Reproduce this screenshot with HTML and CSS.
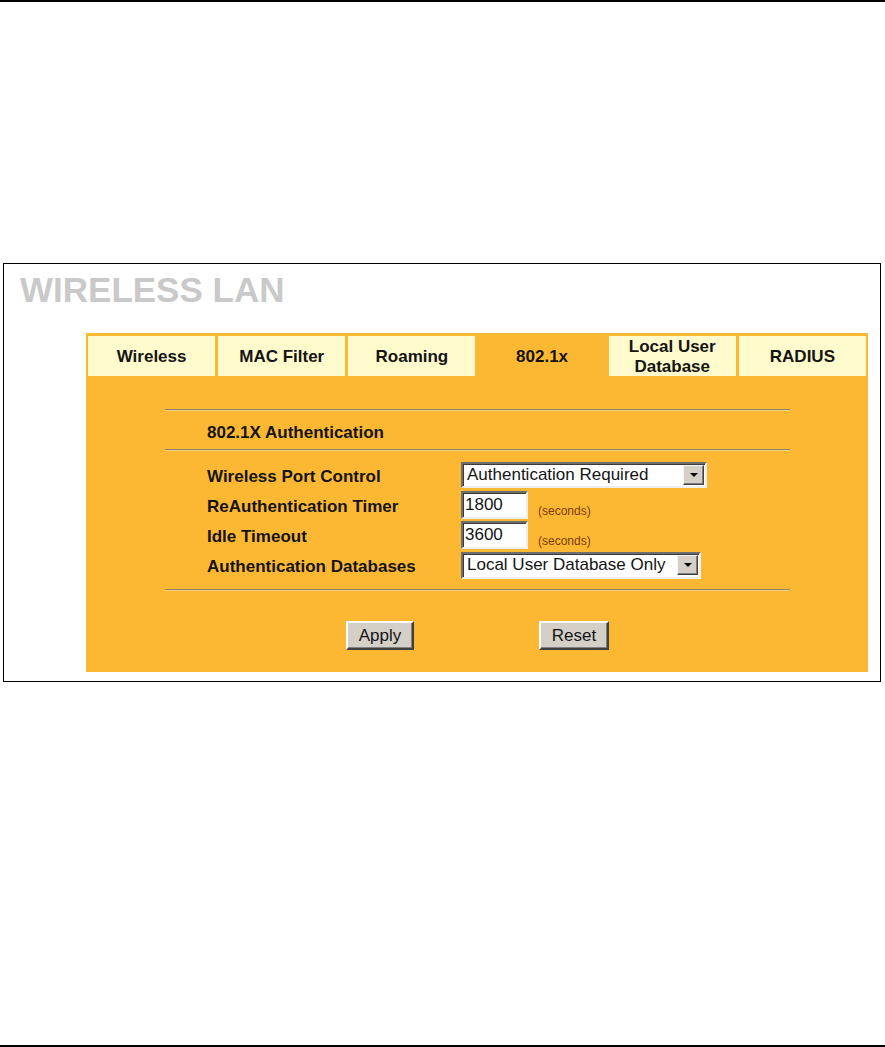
FILE: index.html
```html
<!DOCTYPE html>
<html lang="en">
<head>
  <meta charset="UTF-8" />
  <meta name="viewport" content="width=device-width, initial-scale=1.0"/>
  <title>Wireless LAN - 802.1x</title>
  <link rel="stylesheet" href="styles.css">
</head>
<body>
  <div class="page">
    <div class="top-rule"></div>

    <div class="frame">
      <h1 class="title">WIRELESS LAN</h1>

      <div class="panel">
        <div class="tabs">
          <div class="tab">Wireless</div>
          <div class="tab">MAC Filter</div>
          <div class="tab">Roaming</div>
          <div class="tab active">802.1x</div>
          <div class="tab">Local User<br>Database</div>
          <div class="tab">RADIUS</div>
        </div>

        <div class="content">
          <div class="rule"></div>
          <div class="section-title">802.1X Authentication</div>
          <div class="rule"></div>

          <div class="fields">
            <div class="row">
              <span class="label">Wireless Port Control</span>
              <div class="select port-select">
                <span class="select-value">Authentication Required</span>
                <span class="arrow"><svg width="8" height="4" viewBox="0 0 8 4"><path d="M0 0h8L4 4z" fill="#000"/></svg></span>
              </div>
            </div>
            <div class="row">
              <span class="label">ReAuthentication Timer</span>
              <input class="text-input" type="text" value="1800">
              <span class="unit">(seconds)</span>
            </div>
            <div class="row">
              <span class="label">Idle Timeout</span>
              <input class="text-input" type="text" value="3600">
              <span class="unit">(seconds)</span>
            </div>
            <div class="row">
              <span class="label">Authentication Databases</span>
              <div class="select db-select">
                <span class="select-value">Local User Database Only</span>
                <span class="arrow"><svg width="8" height="4" viewBox="0 0 8 4"><path d="M0 0h8L4 4z" fill="#000"/></svg></span>
              </div>
            </div>
          </div>

          <div class="rule"></div>

          <div class="actions">
            <button class="btn apply">Apply</button>
            <button class="btn reset">Reset</button>
          </div>
        </div>
      </div>
    </div>

    <div class="bottom-rule"></div>
  </div>
</body>
</html>
```

FILE: styles.css
```css
body {
  margin: 0;
  font-family: 'Liberation Sans', Arial, sans-serif;
  background: #fff;
  color: #141414;
}
.page {
  min-height: 100vh;
  display: flex;
  flex-direction: column;
}
.top-rule {
  height: 2px;
  background: #000;
}
.bottom-rule {
  height: 2px;
  background: #000;
  margin-top: auto;
}
.frame {
  margin: 261px 0 0 3px;
  width: 876px;
  border: 1px solid #000;
  padding: 6px 0 9px;
}
.title {
  margin: 0 0 23px 16px;
  font-size: 35px;
  line-height: 40px;
  font-weight: bold;
  color: #c9c9c9;
}
.panel {
  margin: 0 12px 0 82px;
  background: #fcb833;
  padding: 3px 2px 22px;
}
.tabs {
  display: grid;
  grid-template-columns: repeat(6, 1fr);
  gap: 3px;
}
.tab {
  height: 40px;
  background: #fffbcc;
  display: flex;
  align-items: center;
  justify-content: center;
  text-align: center;
  font-size: 17px;
  line-height: 20px;
  font-weight: bold;
  padding-top: 2px;
  box-sizing: border-box;
}
.tab.active {
  background: transparent;
}
.content {
  margin: 33px 76px 0 77px;
}
.rule {
  border-top: 1px solid #8f8468;
  border-bottom: 1px solid #f2cf86;
}
.section-title {
  height: 38px;
  box-sizing: border-box;
  display: flex;
  align-items: center;
  padding: 5px 0 0 42px;
  font-size: 17px;
  font-weight: bold;
}
.fields {
  padding: 9px 0 9px 42px;
}
.row {
  height: 30px;
  display: flex;
  align-items: center;
}
.label {
  width: 254px;
  flex: none;
  padding-top: 4px;
  font-size: 17px;
  font-weight: bold;
}
.select {
  height: 26px;
  box-sizing: border-box;
  display: flex;
  align-items: center;
  background: #fff;
  border: 2px solid;
  border-color: #6e6e6e #eeeeee #eeeeee #6e6e6e;
  box-shadow: inset 1px 1px 0 #3a3a3a;
  padding: 0 1px 0 4px;
  font-size: 17px;
}
.port-select {
  width: 246px;
}
.db-select {
  width: 240px;
  height: 27px;
}
.select-value {
  flex: 1;
  white-space: nowrap;
}
.arrow {
  width: 21px;
  height: 20px;
  box-sizing: border-box;
  display: flex;
  align-items: center;
  justify-content: center;
  background: #d4d0c8;
  border: 1px solid;
  border-color: #f4f4f4 #404040 #404040 #f4f4f4;
  box-shadow: inset -1px -1px 0 #808080;
}
.text-input {
  width: 67px;
  height: 28px;
  box-sizing: border-box;
  margin: 0;
  padding: 0 2px;
  font-family: 'Liberation Sans', Arial, sans-serif;
  font-size: 17px;
  color: #141414;
  background: #fff;
  border: 2px solid;
  border-color: #6e6e6e #eeeeee #eeeeee #6e6e6e;
  box-shadow: inset 1px 1px 0 #3a3a3a;
  outline: none;
}
.unit {
  margin: 11px 0 0 10px;
  font-size: 12px;
  color: #7a3c08;
}
.actions {
  display: flex;
  justify-content: center;
  gap: 125px;
  padding-top: 30px;
}
.btn {
  height: 29px;
  margin: 0;
  padding: 0;
  font-family: 'Liberation Sans', Arial, sans-serif;
  font-size: 17px;
  color: #141414;
  background: #d4d0c8;
  border: 2px solid;
  border-color: #ffffff #404040 #404040 #ffffff;
  box-shadow: inset -1px -1px 0 #808080;
  cursor: pointer;
}
.apply {
  width: 68px;
}
.reset {
  width: 70px;
}
```
